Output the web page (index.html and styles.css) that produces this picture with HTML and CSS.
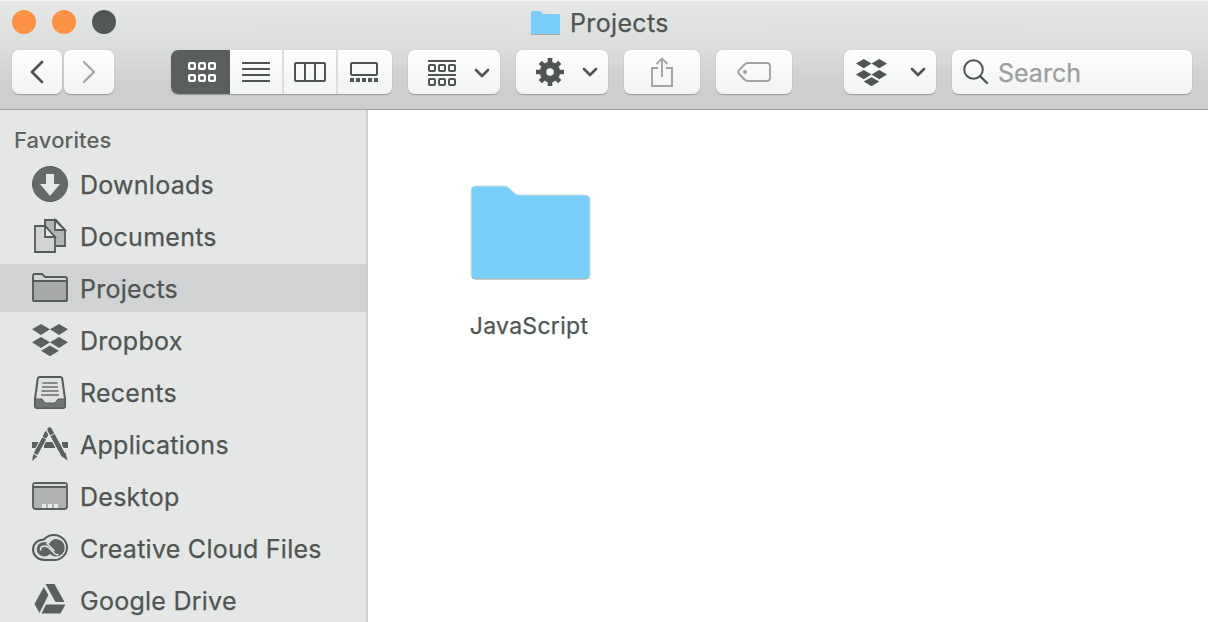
FILE: index.html
```html
<!DOCTYPE html>
<html lang="en">
<head>
<meta charset="utf-8">
<title>Projects</title>
<link rel="stylesheet" href="styles.css">
</head>
<body>
<svg class="defs" width="0" height="0">
  <symbol id="chevron" viewBox="0 0 16 10"><path d="M2 2l6 6 6-6" fill="none" stroke="currentColor" stroke-width="2.6" stroke-linecap="round" stroke-linejoin="round"/></symbol>
  <symbol id="dropbox" viewBox="0 0 36 32"><path d="M9 0l9 5.3-9 5.7-9-5.7zM27 0l9 5.3-9 5.7-9-5.7zM9 13l9 5.3-9 5.7-9-5.7zM27 13l9 5.3-9 5.7-9-5.7zM18 21.5l9 5.3-9 5.5-9-5.5z" fill="currentColor"/></symbol>
</svg>
<div class="window">
  <header class="toolbar">
    <div class="titlebar">
      <div class="lights"><i class="light"></i><i class="light"></i><i class="light light-dark"></i></div>
      <div class="title">
        <svg width="31" height="26" viewBox="0 0 31 26"><path d="M1 24V2.500Q1 1 2.500 1H9q1.500 0 2.500 1.200L13 4h15.500Q30 4 30 5.500V24Z" fill="#78cffb"/><path d="M1 24.500h29" stroke="#a9acad"/></svg>
        <span class="title-text">Projects</span>
      </div>
    </div>
    <div class="controls">
      <div class="btn nav"><svg width="16" height="24" viewBox="0 0 16 24"><path d="M13 2L3 12l10 10" fill="none" stroke="#4f5552" stroke-width="2.800" stroke-linecap="round" stroke-linejoin="round"/></svg></div>
      <div class="btn nav forward"><svg width="16" height="24" viewBox="0 0 16 24"><path d="M3 2l10 10L3 22" fill="none" stroke="#9fa3a1" stroke-width="2.300" stroke-linecap="round" stroke-linejoin="round"/></svg></div>
      <div class="btn views">
        <div class="seg selected"><svg width="28" height="22" viewBox="0 0 28 22"><g fill="none" stroke="#fff" stroke-width="2.200"><rect x="1.100" y="2.100" width="5.800" height="5.800" rx="1"/><rect x="11.100" y="2.100" width="5.800" height="5.800" rx="1"/><rect x="21.100" y="2.100" width="5.800" height="5.800" rx="1"/><rect x="1.100" y="14.100" width="5.800" height="5.800" rx="1"/><rect x="11.100" y="14.100" width="5.800" height="5.800" rx="1"/><rect x="21.100" y="14.100" width="5.800" height="5.800" rx="1"/></g></svg></div>
        <div class="seg"><svg width="28" height="20" viewBox="0 0 28 20"><path d="M0 1h28M0 7h28M0 13h28M0 19h28" stroke="#4f5552" stroke-width="2"/></svg></div>
        <div class="seg"><svg width="32" height="20" viewBox="0 0 32 20"><path d="M2 1h28q1 0 1 1v16q0 1-1 1H2q-1 0-1-1V2q0-1 1-1zM11 1v18M21 1v18" fill="none" stroke="#4f5552" stroke-width="2"/></svg></div>
        <div class="seg"><svg width="28" height="20" viewBox="0 0 28 20"><rect x="1" y="1" width="26" height="12" rx="1" fill="none" stroke="#4f5552" stroke-width="2"/><path d="M0 18h4M6 18h4M12 18h4M18 18h4M24 18h4" stroke="#4f5552" stroke-width="4"/></svg></div>
      </div>
      <div class="btn menu group">
        <svg width="28" height="26" viewBox="0 0 28 26"><g fill="none" stroke="currentColor" stroke-width="2"><path d="M0 1h28M0 15h28"/><rect x="1" y="5" width="6" height="6" rx="1"/><rect x="11" y="5" width="6" height="6" rx="1"/><rect x="21" y="5" width="6" height="6" rx="1"/><rect x="1" y="19" width="6" height="6" rx="1"/><rect x="11" y="19" width="6" height="6" rx="1"/><rect x="21" y="19" width="6" height="6" rx="1"/></g></svg>
        <svg width="16" height="10"><use href="#chevron"/></svg>
      </div>
      <div class="btn menu">
        <svg width="28" height="28" viewBox="-14 -14 28 28"><circle r="7" fill="none" stroke="currentColor" stroke-width="6.500"/><g stroke="currentColor" stroke-width="4.600"><path d="M0-14v5M0 14V9M-14 0h5M14 0H9M-9.700-9.700l3.500 3.500M9.700 9.700L6.200 6.200M9.700-9.700L6.200-6.200M-9.700 9.700l3.500-3.500"/></g></svg>
        <svg width="16" height="10"><use href="#chevron"/></svg>
      </div>
      <div class="btn action"><svg width="22" height="30" viewBox="0 0 22 30"><path d="M7 11H1v18h20V11h-6M11 20V2M5.500 7L11 1.500 16.500 7" fill="none" stroke="#a0a3a2" stroke-width="1.900"/></svg></div>
      <div class="btn action tag"><svg width="34" height="20" viewBox="0 0 34 20"><path d="M11 1h19q3 0 3 3v12q0 3-3 3H11q-2 0-3.500-1.500L1.800 11.500q-1.300-1.500 0-3L7.500 2.500Q9 1 11 1z" fill="none" stroke="#a0a3a2" stroke-width="1.900"/><circle cx="8" cy="10" r="2" fill="#a0a3a2"/></svg></div>
      <div class="btn menu drop">
        <svg width="31" height="27" viewBox="0 0 36 32" preserveAspectRatio="none"><use href="#dropbox" width="36" height="32"/></svg>
        <svg width="16" height="10"><use href="#chevron"/></svg>
      </div>
      <div class="btn search"><svg width="26" height="26" viewBox="0 0 26 26"><circle cx="10.500" cy="10.500" r="9.300" fill="none" stroke="#4f5552" stroke-width="2"/><path d="M17.300 17.300l6.700 6.700" stroke="#4f5552" stroke-width="2.400" stroke-linecap="round"/></svg><span class="search-text">Search</span></div>
    </div>
  </header>
  <div class="main">
    <nav class="sidebar">
      <div class="heading"><span>Favorites</span></div>
      <div class="row"><svg class="icon" viewBox="0 0 36 36"><circle cx="18" cy="18" r="17.500" fill="#656a67" stroke="#565c59"/><path d="M14 8h8v10h6L18 30 8 18h6z" fill="#e7e9e8"/></svg><span>Downloads</span></div>
      <div class="row"><svg class="icon" viewBox="0 0 36 36"><g stroke="#565b58" stroke-width="1.800"><path d="M13 2h11l9 10v16H13z" fill="#b2b5b3"/><path d="M23 2v10h10z" fill="#e4e6e5"/><path d="M3 8h10l10 11v15H3z" fill="#d2d4d4"/><path d="M13 8v11h10z" fill="#e4e6e5"/></g></svg><span>Documents</span></div>
      <div class="row active"><svg class="icon" viewBox="0 0 36 36"><path d="M1 30V6q0-2 2-2h7l3 3h20q2 0 2 2v21q0 1-1 1H2q-1 0-1-1z" fill="#d5d7d7"/><path d="M2 12h32v18H2z" fill="#a6a9a7"/><path d="M1 30V6q0-2 2-2h7l3 3h20q2 0 2 2v21q0 1-1 1H2q-1 0-1-1zM1 11h34" fill="none" stroke="#555b58" stroke-width="1.900"/></svg><span>Projects</span></div>
      <div class="row"><svg class="icon" viewBox="0 0 36 36"><use href="#dropbox" y="2" width="36" height="32"/></svg><span>Dropbox</span></div>
      <div class="row"><svg class="icon" viewBox="0 0 36 36"><path d="M8 3h20q2 0 2.300 2L33 25v7q0 2-2 2H5q-2 0-2-2v-7L5.700 5Q6 3 8 3z" fill="#e0e2e1" stroke="#565b58" stroke-width="2"/><path d="M3 25h7l3 4h10l3-4h7v7q0 2-2 2H5q-2 0-2-2z" fill="#717673" stroke="#565b58" stroke-width="1"/><path d="M10.500 9h15M10 13h16M9.500 17h17M9 21h18" stroke="#696e6b" stroke-width="1.600"/></svg><span>Recents</span></div>
      <div class="row"><svg class="icon" viewBox="0 0 36 36"><g fill="none" stroke="#5b605d"><path d="M0 19h6.500M12 19h11M30 19h6" stroke-width="6"/><path d="M17 3.500L3.500 28.500" stroke="#e5e7e6" stroke-width="6.500"/><path d="M13.200 10l1.300-2.300" stroke-width="4.500" stroke-linecap="round"/><path d="M12.200 12.500L3.700 28" stroke-width="4.300"/><path d="M17.600 4L31 28" stroke="#e5e7e6" stroke-width="7"/><path d="M17.600 3.600L30.500 27.500" stroke-width="4.600" stroke-linecap="round"/></g><path d="M1.200 28l4.200 2.300L.2 35zM28.500 29.500l5-3 2 8z" fill="#5b605d"/><path d="M16.500 10.800l5.500-3" stroke="#e5e7e6" stroke-width="1"/></svg><span>Applications</span></div>
      <div class="row"><svg class="icon" viewBox="0 0 36 36"><rect x="1" y="5" width="34" height="26" rx="2.500" fill="#afb2b1" stroke="#5b605d" stroke-width="1.900"/><path d="M2 6h32v2H2z" fill="#d8dada"/><path d="M1 9h34" stroke="#5b605d" stroke-width="1.800"/><path d="M10 28h4M16 28h4M22 28h4" stroke="#e8eae9" stroke-width="4"/></svg><span>Desktop</span></div>
      <div class="row"><svg class="icon" viewBox="0 0 36 36"><path d="M12 9.500C14.500 6.500 18 5 22 5c7 0 13 5.500 13 12.500S29 30 22.500 30H12.500C6 30 1 25.500 1 19.500S6 9.500 12 9.500z" fill="#dfe1e0" stroke="#555b58" stroke-width="2"/><path d="M12 26.500a7.300 7.300 0 0 1 0-14.600q3 0 5 2Q20 9 24 9a8.500 8.500 0 0 1 0 17.500q-3 0-6-2.500-3 2.500-6 2.500z" fill="#5f6461"/><path d="M8.500 20q0-4 4-4 2.500 0 4.500 2l6 6q1.500 1 3 .5M15 13.500l7 7" fill="none" stroke="#e5e7e6" stroke-width="1.500" stroke-linecap="round"/></svg><span>Creative Cloud Files</span></div>
      <div class="row"><svg class="icon" viewBox="0 0 36 36"><path d="M13.500 2h9l10 18h-9zM11.800 5l4.600 8L7.500 31 2.500 22zM14 22.500h19.500L28.500 31.500H9.500z" fill="#5b605d"/></svg><span>Google Drive</span></div>
    </nav>
    <main class="content">
      <div class="file">
        <svg class="folder" width="124" height="98" viewBox="0 0 124 98"><path d="M3 91V7q0-5 5-5h28q3 0 5 2l6 5.500q1 1.500 4 1.500h66q5 0 5 5V91q0 4-4 4H7q-4 0-4-4z" fill="#77cffa" stroke="#d5dcdf"/><path d="M4 93q1 2 4 2h109q3 0 4-2" fill="none" stroke="#a5a7a8"/></svg>
        <span class="file-name">JavaScript</span>
      </div>
    </main>
  </div>
</div>
</body>
</html>
```
FILE: styles.css
```css
* { box-sizing: border-box; }
body { margin: 0; font-family: Inter, "Open Sans", sans-serif; color: #4f5552; -webkit-text-stroke: 0.25px currentColor; }
svg { display: block; flex: none; }
.defs { position: absolute; }
.window { width: 1208px; height: 622px; overflow: hidden; display: flex; flex-direction: column; background: #fff; }
.toolbar { height: 110px; flex: none; background: linear-gradient(#e6e8e7, #dcdddd 40%, #ceced0 80%, #cdced0); border-top: 1px solid #f4f5f5; border-bottom: 1px solid #a0a2a2; }
.titlebar { height: 49px; padding: 9px 12px 0; display: grid; grid-template-columns: 518px auto 1fr; align-items: start; }
.lights { display: flex; gap: 16px; }
.light { width: 24px; height: 24px; border-radius: 50%; background: #fd9144; }
.light-dark { background: #515752; }
.title { display: flex; gap: 9px; height: 26px; align-items: center; }
.title-text { font-size: 25px; line-height: 26px; letter-spacing: 0.35px; white-space: nowrap; }
.controls { display: flex; padding-left: 12px; }
.btn { height: 44px; border-radius: 7px; background: linear-gradient(#fefefe, #f2f3f3); box-shadow: 0 1px 1px #969999, 0 0 1px #bfc1c1; display: flex; align-items: center; justify-content: center; margin-right: 16px; flex: none; }
.nav { width: 50px; margin-right: 2px; }
.forward { margin-right: 57px; }
.views { width: 221px; overflow: hidden; }
.seg { width: 54px; height: 44px; display: flex; align-items: center; justify-content: center; border-left: 2px solid #dcdddd; }
.seg.selected { width: 59px; background: #5a5f5c; border: 0; padding-left: 3px; }
.selected + .seg { border: 0; width: 52px; }
.seg:last-child { flex: 1; padding-right: 2px; }
.menu { width: 92px; justify-content: space-between; padding: 0 10px 0 20px; }
.group { padding-top: 2px; }
.action { width: 76px; }
.tag { margin-right: 52px; }
.drop { padding-left: 12px; }
.search { width: 240px; justify-content: flex-start; padding-left: 11px; gap: 9px; margin: 0; color: #9b9f9d; }
.search-text { font-size: 25px; padding-top: 2px; }
.main { flex: 1; display: flex; min-height: 0; }
.sidebar { width: 368px; flex: none; background: #e5e7e6; border-right: 2px solid #cdcfce; overflow: hidden; display: flex; flex-direction: column; gap: 4px; }
.heading { height: 46px; flex: none; padding: 15px 0 0 14px; font-size: 22px; line-height: 30px; letter-spacing: 0.1px; color: #5e6360; font-weight: 500; -webkit-text-stroke: 0; }
.row { height: 48px; flex: none; display: flex; align-items: center; gap: 12px; padding-left: 32px; font-size: 25px; line-height: 30px; letter-spacing: 0.26px; white-space: nowrap; }
.row span { padding-top: 2px; }
.active { background: #d2d3d4; }
.icon { width: 36px; height: 36px; color: #5b605d; }
.content { flex: 1; padding: 74px 0 0 100px; }
.file { width: 124px; display: flex; flex-direction: column; align-items: center; }
.file-name { margin: 29px 2px 0 0; font-size: 23px; line-height: 30px; letter-spacing: 0.3px; }
```
